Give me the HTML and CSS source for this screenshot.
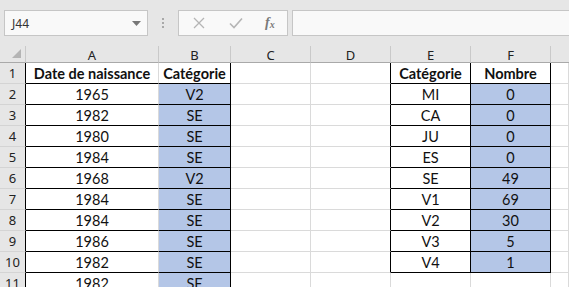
FILE: index.html
```html
<!DOCTYPE html>
<html lang="fr">
<head>
<meta charset="utf-8">
<title>Feuille</title>
<link rel="stylesheet" href="styles.css">
</head>
<body>
<div class="app">
  <div class="fbar">
    <div class="namebox">
      <span class="ref">J44</span>
      <svg class="caret" width="9" height="5" viewBox="0 0 9 5"><path d="M0 0H9L4.5 5Z" fill="#777"/></svg>
    </div>
    <div class="grip"><i></i><i></i><i></i></div>
    <div class="btns">
      <svg class="ic" width="12" height="12" viewBox="0 0 12 12"><path d="M1 1L11 11M11 1L1 11" stroke="#b5b5b5" stroke-width="1.3" fill="none"/></svg>
      <svg class="ic" width="14" height="12" viewBox="0 0 14 12"><path d="M1 6.5L5 10.5L13 1.5" stroke="#b5b5b5" stroke-width="1.6" fill="none"/></svg>
      <span class="fx">f<sub>x</sub></span>
    </div>
    <div class="finput"></div>
  </div>
  <div class="sheet">
    <div class="ch corner"><svg width="9" height="9" viewBox="0 0 9 9"><path d="M9 0V9H0Z" fill="#b4b4b4"/></svg></div>
    <div class="ch">A</div><div class="ch">B</div><div class="ch">C</div><div class="ch">D</div><div class="ch">E</div><div class="ch">F</div><div class="ch last"></div>

    <div class="rh bl">1</div><div class="c b bb">Date de naissance</div><div class="c b bb br">Catégorie</div><div class="c"></div><div class="c br"></div><div class="c b bb br">Catégorie</div><div class="c b bb br">Nombre</div><div class="c"></div>

    <div class="rh bl">2</div><div class="c bb">1965</div><div class="c bl2 bb br">V2</div><div class="c"></div><div class="c br"></div><div class="c bb br">MI</div><div class="c bl2 bb br">0</div><div class="c"></div>
    <div class="rh bl">3</div><div class="c bb">1982</div><div class="c bl2 bb br">SE</div><div class="c"></div><div class="c br"></div><div class="c bb br">CA</div><div class="c bl2 bb br">0</div><div class="c"></div>
    <div class="rh bl">4</div><div class="c bb">1980</div><div class="c bl2 bb br">SE</div><div class="c"></div><div class="c br"></div><div class="c bb br">JU</div><div class="c bl2 bb br">0</div><div class="c"></div>
    <div class="rh bl">5</div><div class="c bb">1984</div><div class="c bl2 bb br">SE</div><div class="c"></div><div class="c br"></div><div class="c bb br">ES</div><div class="c bl2 bb br">0</div><div class="c"></div>
    <div class="rh bl">6</div><div class="c bb">1968</div><div class="c bl2 bb br">V2</div><div class="c"></div><div class="c br"></div><div class="c bb br">SE</div><div class="c bl2 bb br">49</div><div class="c"></div>
    <div class="rh bl">7</div><div class="c bb">1984</div><div class="c bl2 bb br">SE</div><div class="c"></div><div class="c br"></div><div class="c bb br">V1</div><div class="c bl2 bb br">69</div><div class="c"></div>
    <div class="rh bl">8</div><div class="c bb">1984</div><div class="c bl2 bb br">SE</div><div class="c"></div><div class="c br"></div><div class="c bb br">V2</div><div class="c bl2 bb br">30</div><div class="c"></div>
    <div class="rh bl">9</div><div class="c bb">1986</div><div class="c bl2 bb br">SE</div><div class="c"></div><div class="c br"></div><div class="c bb br">V3</div><div class="c bl2 bb br">5</div><div class="c"></div>
    <div class="rh bl">10</div><div class="c bb">1982</div><div class="c bl2 bb br">SE</div><div class="c"></div><div class="c br"></div><div class="c bb br">V4</div><div class="c bl2 bb br">1</div><div class="c"></div>
    <div class="rh bl">11</div><div class="c bb">1982</div><div class="c bl2 bb br">SE</div><div class="c"></div><div class="c"></div><div class="c"></div><div class="c"></div><div class="c"></div>
  </div>
</div>
</body>
</html>
```
FILE: styles.css
```css
html, body {
  margin: 0;
  padding: 0;
  background: #ffffff;
  overflow: hidden;
}
.app {
  width: 569px;
  height: 287px;
  overflow: hidden;
  font-family: "Noto Sans", "Open Sans", sans-serif;
}
.fbar {
  height: 46px;
  background: #e6e6e6;
  display: flex;
  align-items: flex-start;
  padding-top: 10px;
  box-sizing: border-box;
}
.namebox {
  margin-left: 4px;
  width: 144px;
  height: 26px;
  box-sizing: border-box;
  border: 1px solid #c6c6c6;
  background: #f9f9f9;
  display: flex;
  align-items: center;
  justify-content: space-between;
  padding: 0 6px 0 7px;
}
.ref {
  font-size: 12px;
  color: #333;
}
.caret { margin-top: 1px; }
.grip {
  width: 30px;
  height: 26px;
  display: flex;
  flex-direction: column;
  align-items: center;
  justify-content: center;
  gap: 2px;
}
.grip i {
  display: block;
  width: 2px;
  height: 2px;
  background: #a8a8a8;
}
.btns {
  width: 110px;
  height: 26px;
  box-sizing: border-box;
  border: 1px solid #c6c6c6;
  background: #f9f9f9;
  display: flex;
  align-items: center;
  padding-left: 13px;
  gap: 0;
}
.btns .ic:nth-child(1) { margin-right: 24px; margin-left: 1px; }
.btns .ic:nth-child(2) { margin-right: 22px; }
.fx {
  font-family: "Liberation Serif", serif;
  font-style: italic;
  font-weight: bold;
  font-size: 14px;
  color: #7a7a7a;
}
.fx sub { font-size: 10px; vertical-align: -1px; }
.finput {
  margin-left: 4px;
  flex: 1;
  height: 26px;
  box-sizing: border-box;
  border: 1px solid #c6c6c6;
  border-right: none;
  background: #f9f9f9;
}
.sheet {
  display: grid;
  grid-template-columns: 26px 133px 72px 80px 80px 80px 80px 1fr;
  grid-template-rows: 17px repeat(11, 21px);
}
.ch {
  background: #e6e6e6;
  border-right: 1px solid #c9c9c9;
  border-bottom: 1px solid #a9a9a9;
  box-sizing: border-box;
  display: flex;
  align-items: center;
  justify-content: center;
  font-size: 13px;
  color: #222;
  padding-top: 1px;
}
.ch.last { border-right: none; }
.corner {
  justify-content: flex-end;
  align-items: flex-end;
  padding: 0 4px 4px 0;
}
.rh {
  background: #e6e6e6;
  border-right: 1px solid #a9a9a9;
  border-bottom: 1px solid #d4d4d4;
  box-sizing: border-box;
  display: flex;
  align-items: center;
  justify-content: center;
  font-size: 13px;
  color: #222;
}
.rh.bl { border-right-color: #000; }
.c {
  box-sizing: border-box;
  border-right: 1px solid #dadada;
  border-bottom: 1px solid #dadada;
  background: #fff;
  display: flex;
  align-items: center;
  justify-content: center;
  font-family: "Lato", "Noto Sans", sans-serif;
  font-size: 14.5px;
  color: #111;
  white-space: nowrap;
  overflow: hidden;
}
.c.b { font-weight: bold; }
.c.bb { border-bottom-color: #000; }
.c.br { border-right-color: #000; }
.c.bl2 { background: #b4c6e7; }
.c:nth-child(8n+3).bl2, .c.b.br:nth-child(8n+3) { }
```
